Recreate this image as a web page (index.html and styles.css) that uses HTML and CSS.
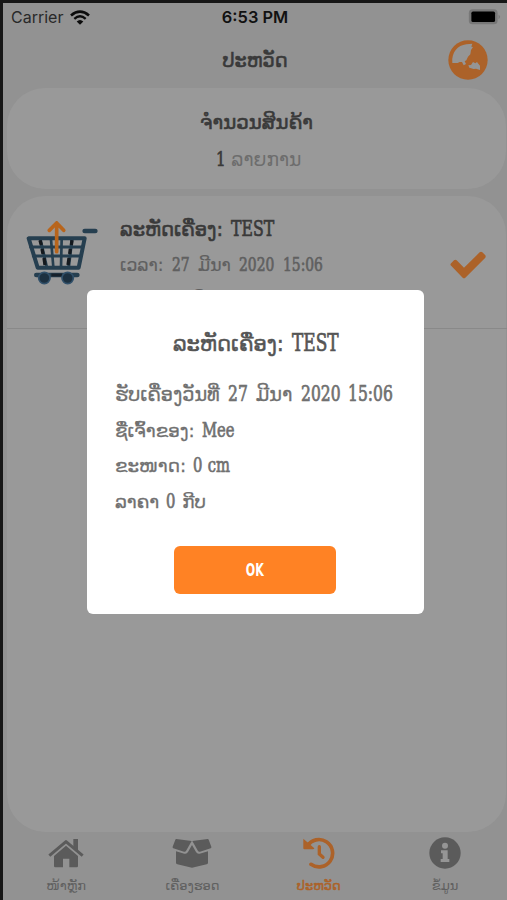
FILE: index.html
```
<!DOCTYPE html>
<html lang="lo">
<head>
    <meta charset="UTF-8">
    <meta name="viewport" content="width=device-width, initial-scale=1.0">
    <title>ປະຫວັດ</title>
    <link rel="stylesheet" href="styles.css">
</head>
<body>
    <div class="app">
        <div class="status-bar">
            <div class="carrier">
                <span>Carrier</span>
                <svg class="wifi" viewBox="0 0 60 44">
                    <path d="M3 16Q30 -7 57 16" fill="none" stroke="#0c0c0c" stroke-width="8"/>
                    <path d="M13 26Q30 11 47 26" fill="none" stroke="#0c0c0c" stroke-width="7"/>
                    <path d="M20 34Q30 25 40 34L30 44Z" fill="#0c0c0c"/>
                </svg>
            </div>
            <b class="time">6:53 PM</b>
            <svg class="battery" viewBox="0 0 100 50">
                <rect x="1" y="1" width="90" height="47" rx="12" fill="#777"/>
                <path d="M94 17Q103 24 94 32Z" fill="#777"/>
                <rect x="9" y="8" width="74" height="33" rx="5" fill="#000"/>
            </svg>
        </div>

        <header>
            <h1>ປະຫວັດ</h1>
            <svg class="globe" viewBox="0 0 120 120">
                <circle cx="60" cy="60" r="59" fill="#ac6229"/>
                <path d="M13 69C10 37 29 16 55 13L73 11L70 20L75 21L69 30L67 43L60 50L55 61L50 64L54 72L47 76L42 66L35 66L29 69Z" fill="#959595"/>
                <path d="M61 76L69 75L75 66L82 70L87 66L91 71L96 77L96 90L84 86L77 87L64 83Z" fill="#959595"/>
            </svg>
        </header>

        <section class="card summary">
            <h2>ຈຳນວນສິນຄ້າ</h2>
            <p><span class="slab one">1</span> <span class="unit">ລາຍການ</span></p>
        </section>

        <section class="card list">
            <div class="item">
                <svg class="cart" viewBox="0 0 222 192">
                    <g stroke="#263f50" fill="none" stroke-linecap="round" stroke-linejoin="round">
                        <path d="M8 52H176L158 140H35Z" stroke-width="12"/>
                        <path d="M14 78H170M22 105H164" stroke-width="9"/>
                        <path d="M43 55L62 138M138 55L128 138" stroke-width="9"/>
                        <path d="M75 55L82 138M107 55L105 138" stroke-width="8"/>
                        <path d="M176 30H208" stroke-width="14"/>
                        <path d="M31 162H154" stroke-width="14"/>
                    </g>
                    <path d="M42 58L46 72M48 84L51 99M54 111L57 132M138 58L136 72M133 84L131 99M129 111L126 132" stroke="#14191e" stroke-width="10"/>
                    <path d="M76 162H108" stroke="#16202a" stroke-width="9"/>
                    <g fill="#1c3040" stroke="#31506a" stroke-width="5">
                        <circle cx="55" cy="171" r="17"/>
                        <circle cx="125" cy="171" r="17"/>
                    </g>
                    <path d="M92 92V8M70 28L92 6L113 28" fill="none" stroke="#b8651c" stroke-width="11" stroke-linecap="round"/>
                </svg>
                <div class="item-text">
                    <h3>ລະຫັດເຄື່ອງ: <span class="slab test">TEST</span></h3>
                    <p>ເວລາ: <span class="slab day">27</span> ມີນາ <span class="slab year">2020</span> <span class="slab">15:06</span></p>
                    <p>ລາຄາ: <span class="slab zero">0</span> ກີບ</p>
                </div>
                <svg class="check" viewBox="0 0 108 84">
                    <path d="M2 43Q0 39 4 36L12 28Q16 25 20 28L42 50L89 4Q93 0 97 4L106 13Q108 16 106 20L46 80Q42 84 38 80Z" fill="#ac6229"/>
                </svg>
            </div>
        </section>

        <nav>
            <a class="tab">
                <svg viewBox="0 0 108 96">
                    <path d="M4 56L54 14L104 56" fill="none" stroke="#5b5b5b" stroke-width="9" stroke-linejoin="round"/>
                    <path d="M76 6H90V41L76 29ZM18 57L54 26L90 57V87Q90 91 86 91H64V65H45V91H22Q18 91 18 87Z" fill="#5b5b5b"/>
                </svg>
                <span>ໜ້າຫຼັກ</span>
            </a>
            <a class="tab">
                <svg class="box" viewBox="0 0 118 96">
                    <path d="M12 6L58 12L41 42Q39 45 35 44L3 34Q0 33 1 29L9 8Q10 5 12 6ZM106 6L60 12L77 42Q79 45 83 44L115 34Q118 33 117 29L109 8Q108 5 106 6Z" fill="#5b5b5b"/>
                    <path d="M11 43L36 50Q43 52 47 45L59 24L71 45Q75 52 82 50L107 43V77Q107 81 103 82L59 92L15 82Q11 81 11 77Z" fill="#5b5b5b"/>
                </svg>
                <span>ເຄື່ອງຮອດ</span>
            </a>
            <a class="tab active">
                <svg viewBox="0 0 96 96">
                    <path d="M13 27A41 41 0 1 1 24 82" fill="none" stroke="#ac6229" stroke-width="11" stroke-linecap="round"/>
                    <path d="M1 5L34 34Q33 37 30 37H4Q1 37 1 34Z" fill="#ac6229"/>
                    <path d="M49 29V51L60 61" fill="none" stroke="#ac6229" stroke-width="10" stroke-linecap="round"/>
                </svg>
                <span>ປະຫວັດ</span>
            </a>
            <a class="tab">
                <svg viewBox="0 0 96 96">
                    <circle cx="48" cy="48" r="47" fill="#5b5b5b"/>
                    <circle cx="48" cy="26" r="9" fill="#959595"/>
                    <path d="M36 40H56V66H61V75H35V66H41V49H36Z" fill="#959595"/>
                </svg>
                <span>ຂໍ້ມູນ</span>
            </a>
        </nav>

        <div class="modal">
            <h3>ລະຫັດເຄື່ອງ: <span class="slab test">TEST</span></h3>
            <div class="details">
                <p class="received">ຮັບເຄື່ອງວັນທີ່ <span class="slab day">27</span> ມີນາ <span class="slab year">2020</span> <span class="slab">15:06</span></p>
                <p>ຊື່ເຈົ້າຂອງ: <span class="slab">Mee</span></p>
                <p>ຂະໜາດ: <span class="slab">0 cm</span></p>
                <p>ລາຄາ <span class="slab zero">0</span> ກີບ</p>
            </div>
            <button class="ok"><span>OK</span></button>
        </div>
    </div>
</body>
</html>
```
FILE: styles.css
```
* {
    box-sizing: border-box;
}
body {
    margin: 0;
    background-color: #929292;
    font-family: "DejaVu Sans", sans-serif;
    color: #393939;
}
h1, h2, h3, p {
    margin: 0;
    font-weight: normal;
    white-space: nowrap;
}
.app {
    position: relative;
    display: flex;
    flex-direction: column;
    height: 900px;
    border-top: 3px solid #171717;
    border-left: 3px solid #171717;
    overflow: hidden;
}
.status-bar {
    display: grid;
    grid-template-columns: 1fr auto 1fr;
    align-items: center;
    height: 28px;
    padding: 0 8px 0 8px;
    font-family: Inter, sans-serif;
    font-size: 16px;
    color: #111;
}
.carrier {
    display: flex;
    align-items: center;
    gap: 7px;
    color: #292929;
}
.wifi {
    width: 20px;
    height: 15px;
}
.time {
    font-size: 16.4px;
    font-weight: 600;
}
.battery {
    justify-self: end;
    width: 33px;
    height: 16px;
    margin-right: -2px;
}
header {
    display: grid;
    grid-template-columns: 1fr auto 1fr;
    align-items: center;
    height: 57px;
}
header h1 {
    grid-column: 2;
    padding-top: 2px;
    font-size: 19.3px;
    -webkit-text-stroke: 0.6px;
}
.globe {
    justify-self: end;
    width: 40px;
    height: 40px;
    margin-right: 19px;
}
.card {
    margin: 0 1px 0 4px;
    border-radius: 38px;
    background-color: #999;
}
.summary {
    height: 101px;
    margin-bottom: 7px;
    padding-top: 17px;
    text-align: center;
}
.summary h2 {
    font-size: 19.8px;
    line-height: 36px;
    -webkit-text-stroke: 0.6px;
}
.summary p {
    padding-left: 4px;
    font-size: 18.7px;
    line-height: 37px;
}
.summary .unit {
    color: #6d6d6d;
}
.list {
    flex: 1;
}
.item {
    display: flex;
    align-items: flex-start;
    height: 133px;
    padding: 24px 21px 0 19px;
    margin-right: -1px;
    border-bottom: 1px solid #898989;
}
.cart {
    flex: none;
    width: 74px;
    height: 64px;
    margin-top: 1px;
}
.item-text {
    flex: 1;
    margin: -8px 0 0 20px;
}
.item h3 {
    font-size: 19.5px;
    line-height: 36px;
    word-spacing: 2px;
    -webkit-text-stroke: 0.6px;
}
.item p {
    font-size: 17.2px;
    line-height: 34px;
    word-spacing: 3px;
    color: #606060;
    -webkit-text-stroke: 0.2px;
}
.check {
    flex: none;
    width: 36px;
    height: 28px;
    margin-top: 31px;
}
/* condensed slab digits and Latin letters next to the Lao text */
.slab {
    display: inline-block;
    font-family: "DejaVu Serif", serif;
    font-size: 1.12em;
    font-stretch: condensed;
    line-height: 1;
    transform: scaleX(0.8);
    transform-origin: left;
    -webkit-text-stroke: 0.7px;
}
.slab.test {
    margin-right: -0.5em;
}
.slab.day {
    margin-right: -0.23em;
}
.slab.year {
    margin-right: -0.46em;
}
.slab.zero, .slab.one {
    margin-right: -0.11em;
}
nav {
    display: grid;
    grid-template-columns: repeat(4, 126.3px);
    height: 68px;
}
.tab {
    display: flex;
    flex-direction: column;
    align-items: center;
    padding-top: 5px;
    font-size: 13px;
    line-height: 34px;
    white-space: nowrap;
    color: #606060;
}
.tab svg {
    width: 36px;
    height: 32px;
    flex: none;
}
.tab .box {
    width: 40px;
}
.active {
    color: #ac6229;
    -webkit-text-stroke: 0.5px;
}
.modal {
    position: absolute;
    top: 287px;
    left: 84px;
    width: 337px;
    height: 324px;
    padding-top: 36px;
    border-radius: 6px;
    background-color: #fff;
    color: #707070;
}
.modal h3 {
    font-size: 21px;
    line-height: 36px;
    text-align: center;
    word-spacing: 1px;
    color: #555;
    -webkit-text-stroke: 0.5px;
}
.details {
    height: 184px;
    padding: 15px 0 0 28px;
    font-size: 18.3px;
    line-height: 35.5px;
    word-spacing: 1px;
    -webkit-text-stroke: 0.3px;
}
.details .received {
    font-size: 19.3px;
    word-spacing: 2px;
}
.ok {
    display: block;
    width: 162px;
    height: 48px;
    margin: 0 auto 0 87px;
    border: 0;
    border-radius: 6px;
    background-color: #ff8224;
    color: #fff;
    font-family: "DejaVu Sans", sans-serif;
    font-size: 17px;
    font-weight: bold;
}
.ok span {
    display: inline-block;
    transform: scaleX(0.65);
}
```
